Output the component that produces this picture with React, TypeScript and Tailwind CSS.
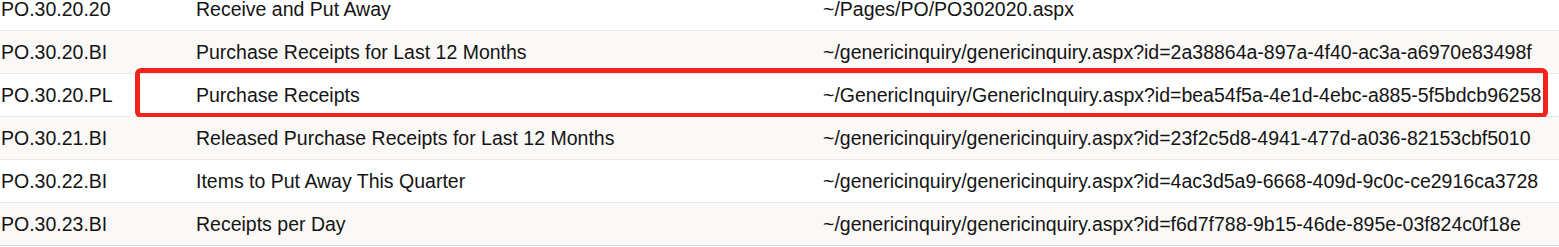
import React from "react";

const rows = [
  ["PO.30.20.20", "Receive and Put Away", "~/Pages/PO/PO302020.aspx"],
  ["PO.30.20.BI", "Purchase Receipts for Last 12 Months", "~/genericinquiry/genericinquiry.aspx?id=2a38864a-897a-4f40-ac3a-a6970e83498f"],
  ["PO.30.20.PL", "Purchase Receipts", "~/GenericInquiry/GenericInquiry.aspx?id=bea54f5a-4e1d-4ebc-a885-5f5bdcb96258"],
  ["PO.30.21.BI", "Released Purchase Receipts for Last 12 Months", "~/genericinquiry/genericinquiry.aspx?id=23f2c5d8-4941-477d-a036-82153cbf5010"],
  ["PO.30.22.BI", "Items to Put Away This Quarter", "~/genericinquiry/genericinquiry.aspx?id=4ac3d5a9-6668-409d-9c0c-ce2916ca3728"],
  ["PO.30.23.BI", "Receipts per Day", "~/genericinquiry/genericinquiry.aspx?id=f6d7f788-9b15-46de-895e-03f824c0f18e"],
];

export default function App() {
  return (
    <div className="w-[1559px] h-[247px] overflow-hidden bg-white text-[#141414] text-[19.5px]" style={{ fontFamily: '"Liberation Sans", Arial, sans-serif' }}>
      <div className="-mt-[12px]">
        {rows.map((r, i) => (
          <div
            key={i}
            className={`relative grid grid-cols-[196px_627px_1fr] items-center h-[43px] pt-[1px] border-b ${i === 5 ? "border-[#d4d4d4]" : "border-[#ece9e6]"} ${i % 2 === 1 ? "bg-[#fbf9f7]" : "bg-white"}`}
          >
            <div className="pl-[1px] whitespace-nowrap">{r[0]}</div>
            <div className="whitespace-nowrap">{r[1]}</div>
            <div className="whitespace-nowrap">{r[2]}</div>
            {i === 2 && (
              <div className="absolute left-[135px] top-[-6px] w-[1413px] h-[50px] border-[5px] border-[#f0241c] rounded-[6px] pointer-events-none" />
            )}
          </div>
        ))}
      </div>
    </div>
  );
}
